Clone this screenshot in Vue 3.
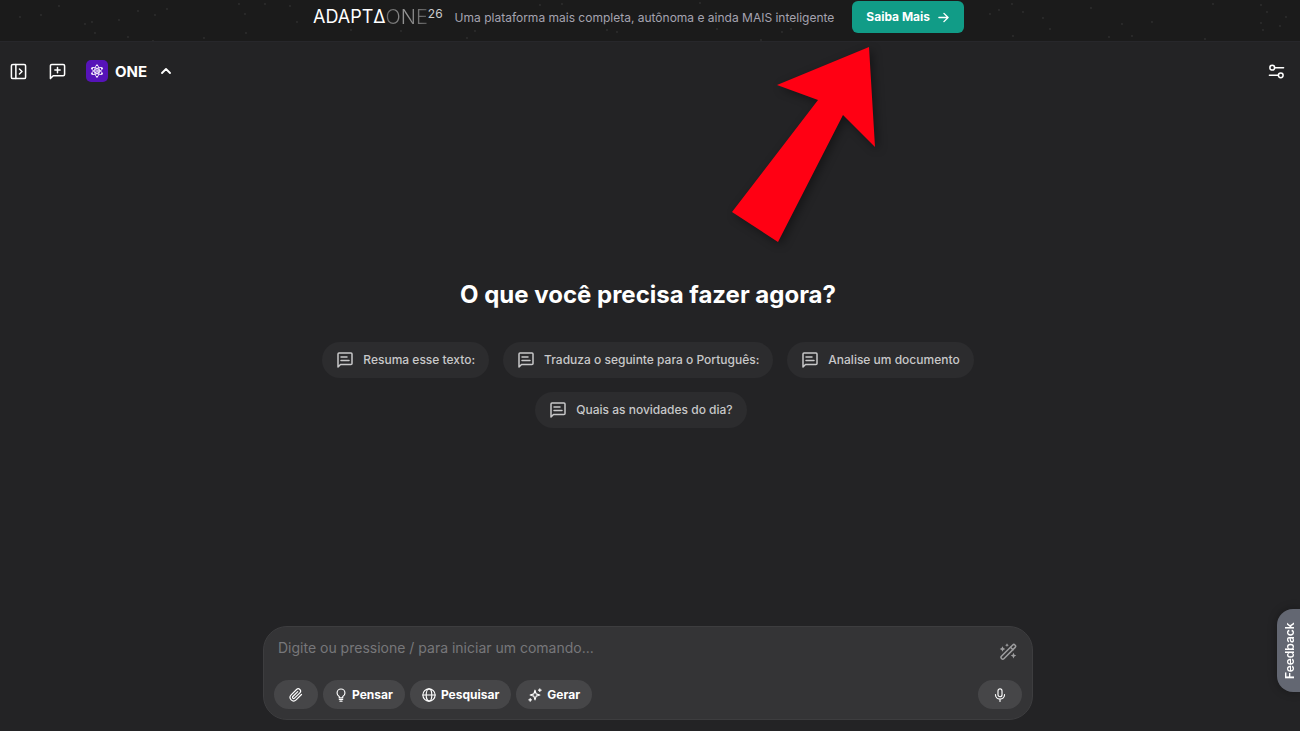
<template>
  <div class="app">
    <!-- Banner -->
    <aside class="banner">
      <svg class="stars" aria-hidden="true">
        <circle v-for="(star, i) in stars" :key="i" :cx="star[0]" :cy="star[1]" r="0.9" />
      </svg>
      <div class="brand">
        <span class="brand-main">ADAPTΔ</span><span class="brand-one">ONE</span><sup>26</sup>
      </div>
      <p class="banner-text">Uma plataforma mais completa, autônoma e ainda MAIS inteligente</p>
      <a class="banner-link" href="#">
        Saiba Mais
        <svg class="icon-arrow" viewBox="0 0 12 12"><path d="M1 6h10M6.500 1.500 11 6l-4.500 4.500" /></svg>
      </a>
    </aside>

    <!-- Top bar -->
    <header class="topbar">
      <button class="icon-btn" type="button" aria-label="Abrir menu">
        <svg class="icon" viewBox="0 0 18 18">
          <rect x="1.500" y="1.500" width="15" height="15" rx="1.500" />
          <path d="M6.200 1.500v15M10 6.300l2.700 2.700-2.700 2.700" />
        </svg>
      </button>
      <button class="icon-btn" type="button" aria-label="Nova conversa">
        <svg class="icon" viewBox="0 0 18 18">
          <path d="M1.500 16.500V3A1.500 1.500 0 0 1 3 1.500h12A1.500 1.500 0 0 1 16.500 3v9a1.500 1.500 0 0 1-1.500 1.500H4.500zM9 4.700v5.600M6.200 7.500h5.600" />
        </svg>
      </button>
      <button class="model" type="button">
        <span class="model-logo">
          <svg viewBox="0 0 16 16">
            <ellipse cx="8" cy="8" rx="2.600" ry="6.800" />
            <ellipse cx="8" cy="8" rx="2.600" ry="6.800" transform="rotate(60 8 8)" />
            <ellipse cx="8" cy="8" rx="2.600" ry="6.800" transform="rotate(120 8 8)" />
            <circle cx="8" cy="8" r="1.300" />
            <circle class="dot" cx="8" cy="1.500" r="1" />
            <circle class="dot" cx="8" cy="14.500" r="1" />
            <circle class="dot" cx="2.400" cy="4.800" r="1" />
            <circle class="dot" cx="13.600" cy="4.800" r="1" />
            <circle class="dot" cx="2.400" cy="11.200" r="1" />
            <circle class="dot" cx="13.600" cy="11.200" r="1" />
          </svg>
        </span>
        ONE
        <svg class="chevron" viewBox="0 0 10 6"><path d="M1 5l4-4 4 4" /></svg>
      </button>
      <button class="icon-btn settings" type="button" aria-label="Configurações">
        <svg class="icon" viewBox="0 0 18 18">
          <circle cx="4.500" cy="5" r="2.500" />
          <circle cx="13.500" cy="13" r="2.500" />
          <path d="M7 5h9.500M1.500 13H11" />
        </svg>
      </button>
    </header>

    <!-- Suggestions -->
    <main class="hero">
      <h1>O que você precisa fazer agora?</h1>
      <div class="chips">
        <button v-for="item in suggestions" :key="item" class="chip" type="button" @click="message = item">
          <svg class="chip-icon" viewBox="0 0 16 16">
            <path d="M1 15V2a1 1 0 0 1 1-1h12a1 1 0 0 1 1 1v9.500a1 1 0 0 1-1 1H3.500zM4 5h6M4 8.500h8" />
          </svg>
          {{ item }}
        </button>
      </div>
    </main>

    <!-- Composer -->
    <form class="composer" @submit.prevent>
      <div class="composer-top">
        <textarea v-model="message" rows="1" aria-label="Mensagem" placeholder="Digite ou pressione / para iniciar um comando..."></textarea>
        <button class="wand" type="button" aria-label="Melhorar texto">
          <svg viewBox="0 0 18 18">
            <rect x="-1.700" y="-9.500" width="3.400" height="19" rx="1.500" transform="translate(9.300 8.800) rotate(45)" />
            <path d="M11.500 4.200l2.500 2.500" />
            <path class="spark" d="M3.500 3.200l.9 1.900 1.900.9-1.900.9-.9 1.900-.9-1.900L.7 6l1.900-.9zM8 .3l.6 1.300 1.300.6-1.300.6L8 4.100l-.6-1.300-1.300-.6 1.300-.6zM14.500 9.800l.9 1.900 1.900.9-1.900.9-.9 1.900-.9-1.900-1.900-.9 1.900-.9z" />
          </svg>
        </button>
      </div>
      <div class="tools">
        <button class="tool tool-icon" type="button" aria-label="Anexar arquivo">
          <svg viewBox="0 0 24 24">
            <path d="M21.400 11.100l-9.200 9.200a6 6 0 0 1-8.500-8.500l9.200-9.200a4 4 0 0 1 5.700 5.700l-9.200 9.200a2 2 0 0 1-2.800-2.900l8.400-8.400" />
          </svg>
        </button>
        <button class="tool" type="button">
          <svg class="bulb" viewBox="0 0 12 16">
            <path d="M4 11.300V9.800C2.500 9 1.500 7.500 1.500 5.700a4.500 4.500 0 0 1 9 0C10.500 7.500 9.500 9 8 9.800v1.500zM4 13.200h4M4.800 15h2.400" />
          </svg>
          Pensar
        </button>
        <button class="tool" type="button">
          <svg viewBox="0 0 16 16">
            <circle cx="8" cy="8" r="7" />
            <ellipse cx="8" cy="8" rx="3.200" ry="7" />
            <path d="M1 8h14" />
          </svg>
          Pesquisar
        </button>
        <button class="tool" type="button">
          <svg viewBox="0 0 16 16">
            <path d="M8 2.500l1.300 4.200L13.500 8l-4.200 1.300L8 13.500 6.700 9.300 2.500 8l4.200-1.300zM13.500 1v3M12 2.500h3M2.500 12v3M1 13.500h3" />
          </svg>
          Gerar
        </button>
        <button class="tool tool-icon mic" type="button" aria-label="Gravar áudio">
          <svg viewBox="0 0 16 16">
            <rect x="5.700" y="1" width="4.600" height="9" rx="2.300" />
            <path d="M2.800 7.500a5.200 5.200 0 0 0 10.400 0M8 12.700V15.500" />
          </svg>
        </button>
      </div>
    </form>

    <button class="feedback" type="button">Feedback</button>

    <svg class="pointer" viewBox="0 0 143 195" aria-hidden="true">
      <path d="M137 0 45 38 86 53 0 165 46 195 111 68 143 100z" />
    </svg>
  </div>
</template>

<script setup>
import { ref } from 'vue';

const message = ref('');

const suggestions = [
  'Resuma esse texto:',
  'Traduza o seguinte para o Português:',
  'Analise um documento',
  'Quais as novidades do dia?'
];

// [x, y]
const stars = [
  [20, 17], [41, 15], [59, 6], [85, 24], [92, 22], [95, 33], [119, 20], [128, 37],
  [138, 11], [155, 15], [167, 9], [153, 41], [204, 38], [239, 4], [245, 14], [246, 33],
  [265, 4], [290, 6], [297, 22], [351, 30], [401, 31], [467, 38], [475, 31], [540, 5],
  [562, 4], [607, 30], [617, 32], [700, 3], [717, 29], [761, 40], [782, 32], [791, 29],
  [990, 14], [999, 10], [1012, 4], [1023, 12], [1043, 18], [1050, 29], [1013, 36],
  [1091, 8], [1109, 37], [1122, 24], [1132, 36], [1152, 22], [1205, 39], [1213, 4],
  [1261, 5], [1267, 12], [1261, 23], [1263, 30], [1280, 26], [1286, 17]
];
</script>

<style>
body {
  margin: 0;
  background: #232325;
}
</style>

<style scoped>
.app {
  position: relative;
  display: flex;
  flex-direction: column;
  min-height: 100vh;
  overflow: hidden;
  color: #fff;
  font-family: Inter, sans-serif;
  font-size: 12px;
}

button {
  border: 0;
  padding: 0;
  background: none;
  color: inherit;
  font: inherit;
  cursor: pointer;
}

svg {
  flex: none;
  fill: none;
  stroke: currentColor;
  stroke-width: 1.5;
  stroke-linecap: round;
  stroke-linejoin: round;
}

.banner {
  position: relative;
  display: flex;
  align-items: center;
  justify-content: center;
  padding: 1px 23px 8px 0;
  border-bottom: 1px solid #27272b;
  background: #1b1b1b;
}

.stars {
  position: absolute;
  inset: 0;
  width: 100%;
  height: 100%;
  fill: #303030;
  stroke: none;
}

.brand {
  display: flex;
  align-items: center;
  margin-right: 12px;
  font-size: 18px;
  line-height: 20px;
}

.brand-one {
  background: linear-gradient(90deg, #666, #999 50%, #555);
  background-clip: text;
  color: transparent;
  font-size: 20px;
  font-weight: 300;
}

.brand sup {
  align-self: flex-start;
  color: #ccc;
  font-size: 12px;
  line-height: 14px;
}

.banner-text {
  margin: 0 18px 0 0;
  color: #a5a3b0;
}

.banner-link {
  position: relative;
  display: flex;
  align-items: center;
  gap: 8px;
  padding: 0 15px 0 14px;
  border-radius: 6px;
  background: #119c87;
  color: #fff;
  font-weight: 700;
  line-height: 32px;
  text-decoration: none;
}

.icon-arrow {
  width: 11px;
  height: 11px;
}

.topbar {
  display: flex;
  align-items: center;
  height: 58px;
  padding: 0 15px 0 10px;
}

.icon-btn {
  display: flex;
  margin-right: 22px;
}

.icon {
  width: 17px;
  height: 17px;
  stroke-width: 1.6;
}

.model {
  display: flex;
  align-items: center;
  gap: 7px;
  margin-left: -2px;
  font-size: 15px;
  font-weight: 700;
}

.model-logo {
  display: flex;
  align-items: center;
  justify-content: center;
  width: 22px;
  height: 22px;
  border-radius: 5px;
  background: #5613b8;
}

.model-logo svg {
  width: 14px;
  height: 14px;
  stroke-width: 0.9;
}

.model-logo .dot {
  fill: #fff;
  stroke: none;
}

.chevron {
  width: 10px;
  height: 6px;
  margin-left: 7px;
  stroke-width: 1.8;
}

.settings {
  margin: 0 0 0 auto;
}

.hero {
  display: flex;
  flex: 1;
  flex-direction: column;
  align-items: center;
  justify-content: center;
  padding: 0 4px 20px 0;
}

h1 {
  margin: 0 0 31px;
  font-size: 24px;
  font-weight: 700;
  line-height: 32px;
}

.chips {
  display: flex;
  flex-wrap: wrap;
  justify-content: center;
  gap: 14px;
  max-width: 700px;
}

.chip {
  display: flex;
  align-items: center;
  gap: 10px;
  height: 36px;
  padding: 0 14px 0 15px;
  border-radius: 18px;
  background: #2c2c2e;
  color: #c8c8c9;
  font-weight: 500;
}

.chip:last-child {
  margin-right: 14px;
}

.chip-icon {
  width: 16px;
  height: 16px;
}

.composer {
  box-sizing: border-box;
  align-self: center;
  width: calc(100% - 32px);
  max-width: 770px;
  margin: 0 4px 11px 0;
  padding: 11px 10px 10px;
  border: 1px solid #3d3d3f;
  border-radius: 24px;
  background: #343436;
}

.composer-top {
  display: flex;
  align-items: flex-start;
  justify-content: space-between;
  padding: 0 5px 0 4px;
}

textarea {
  flex: 1;
  height: 42px;
  padding: 0;
  border: 0;
  outline: 0;
  background: none;
  color: #fff;
  font: inherit;
  font-size: 14px;
  line-height: 20px;
  resize: none;
}

textarea::placeholder {
  color: #77777a;
}

.wand {
  display: flex;
  margin-top: 5px;
  color: #9d9d9f;
}

.wand svg {
  width: 18px;
  height: 18px;
}

.wand .spark {
  fill: currentColor;
  stroke: none;
}

.tools {
  display: flex;
  gap: 5px;
}

.tool {
  display: flex;
  align-items: center;
  justify-content: center;
  gap: 5px;
  height: 29px;
  padding: 0 12px;
  border-radius: 15px;
  background: #464648;
  font-weight: 700;
}

.tool svg {
  width: 14px;
  height: 14px;
  stroke-width: 1.3;
}

.tool .bulb {
  width: 12px;
}

.tool-icon {
  width: 44px;
}

.tool-icon:first-child svg {
  stroke-width: 2;
}

.mic {
  margin-left: auto;
}

.feedback {
  position: absolute;
  right: 0;
  bottom: 39px;
  height: 83px;
  padding: 0 5px 0 2px;
  border-radius: 0 16px 16px 0;
  background: #636772;
  box-shadow: 0 0 10px rgba(0, 0, 0, 0.3);
  font-weight: 600;
  line-height: 16px;
  writing-mode: vertical-rl;
  transform: rotate(180deg);
}

.pointer {
  position: absolute;
  top: 47px;
  left: calc(50% + 82px);
  width: 143px;
  height: 195px;
  overflow: visible;
  fill: #ff0013;
  stroke: none;
  filter: drop-shadow(3px 3px 5px rgba(0, 0, 0, 0.4));
  pointer-events: none;
}
</style>
